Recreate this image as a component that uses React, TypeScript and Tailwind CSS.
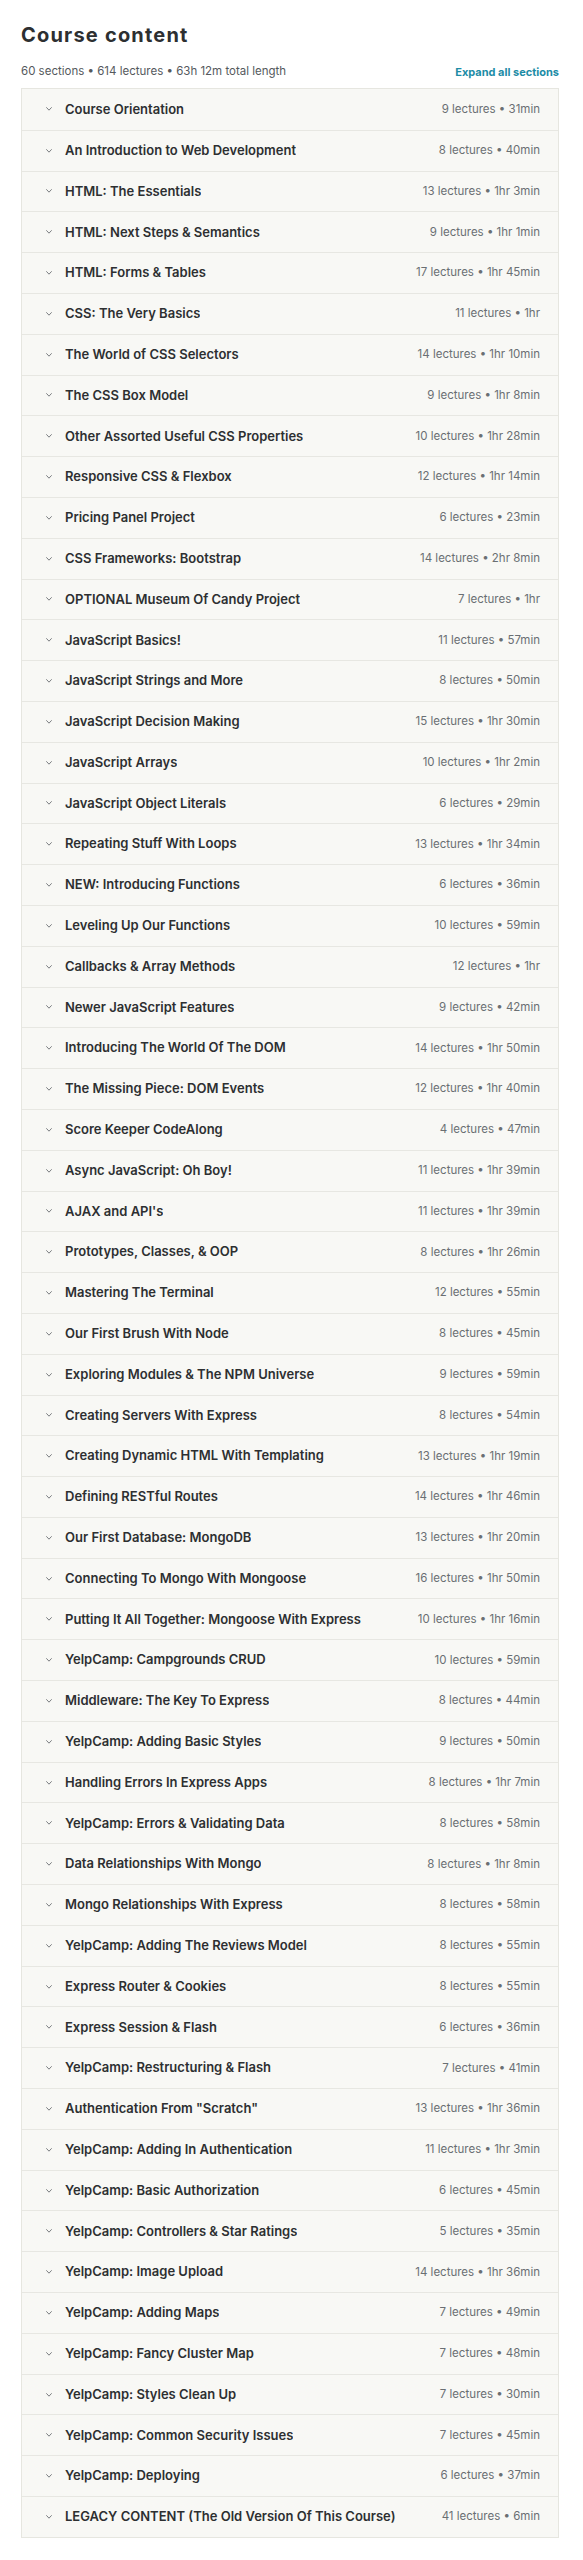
interface Section {
    title: string;
    meta: string;
}

const sections: Section[] = [
    { title: "Course Orientation", meta: "9 lectures • 31min" },
    { title: "An Introduction to Web Development", meta: "8 lectures • 40min" },
    { title: "HTML: The Essentials", meta: "13 lectures • 1hr 3min" },
    { title: "HTML: Next Steps & Semantics", meta: "9 lectures • 1hr 1min" },
    { title: "HTML: Forms & Tables", meta: "17 lectures • 1hr 45min" },
    { title: "CSS: The Very Basics", meta: "11 lectures • 1hr" },
    { title: "The World of CSS Selectors", meta: "14 lectures • 1hr 10min" },
    { title: "The CSS Box Model", meta: "9 lectures • 1hr 8min" },
    { title: "Other Assorted Useful CSS Properties", meta: "10 lectures • 1hr 28min" },
    { title: "Responsive CSS & Flexbox", meta: "12 lectures • 1hr 14min" },
    { title: "Pricing Panel Project", meta: "6 lectures • 23min" },
    { title: "CSS Frameworks: Bootstrap", meta: "14 lectures • 2hr 8min" },
    { title: "OPTIONAL Museum Of Candy Project", meta: "7 lectures • 1hr" },
    { title: "JavaScript Basics!", meta: "11 lectures • 57min" },
    { title: "JavaScript Strings and More", meta: "8 lectures • 50min" },
    { title: "JavaScript Decision Making", meta: "15 lectures • 1hr 30min" },
    { title: "JavaScript Arrays", meta: "10 lectures • 1hr 2min" },
    { title: "JavaScript Object Literals", meta: "6 lectures • 29min" },
    { title: "Repeating Stuff With Loops", meta: "13 lectures • 1hr 34min" },
    { title: "NEW: Introducing Functions", meta: "6 lectures • 36min" },
    { title: "Leveling Up Our Functions", meta: "10 lectures • 59min" },
    { title: "Callbacks & Array Methods", meta: "12 lectures • 1hr" },
    { title: "Newer JavaScript Features", meta: "9 lectures • 42min" },
    { title: "Introducing The World Of The DOM", meta: "14 lectures • 1hr 50min" },
    { title: "The Missing Piece: DOM Events", meta: "12 lectures • 1hr 40min" },
    { title: "Score Keeper CodeAlong", meta: "4 lectures • 47min" },
    { title: "Async JavaScript: Oh Boy!", meta: "11 lectures • 1hr 39min" },
    { title: "AJAX and API's", meta: "11 lectures • 1hr 39min" },
    { title: "Prototypes, Classes, & OOP", meta: "8 lectures • 1hr 26min" },
    { title: "Mastering The Terminal", meta: "12 lectures • 55min" },
    { title: "Our First Brush With Node", meta: "8 lectures • 45min" },
    { title: "Exploring Modules & The NPM Universe", meta: "9 lectures • 59min" },
    { title: "Creating Servers With Express", meta: "8 lectures • 54min" },
    { title: "Creating Dynamic HTML With Templating", meta: "13 lectures • 1hr 19min" },
    { title: "Defining RESTful Routes", meta: "14 lectures • 1hr 46min" },
    { title: "Our First Database: MongoDB", meta: "13 lectures • 1hr 20min" },
    { title: "Connecting To Mongo With Mongoose", meta: "16 lectures • 1hr 50min" },
    { title: "Putting It All Together: Mongoose With Express", meta: "10 lectures • 1hr 16min" },
    { title: "YelpCamp: Campgrounds CRUD", meta: "10 lectures • 59min" },
    { title: "Middleware: The Key To Express", meta: "8 lectures • 44min" },
    { title: "YelpCamp: Adding Basic Styles", meta: "9 lectures • 50min" },
    { title: "Handling Errors In Express Apps", meta: "8 lectures • 1hr 7min" },
    { title: "YelpCamp: Errors & Validating Data", meta: "8 lectures • 58min" },
    { title: "Data Relationships With Mongo", meta: "8 lectures • 1hr 8min" },
    { title: "Mongo Relationships With Express", meta: "8 lectures • 58min" },
    { title: "YelpCamp: Adding The Reviews Model", meta: "8 lectures • 55min" },
    { title: "Express Router & Cookies", meta: "8 lectures • 55min" },
    { title: "Express Session & Flash", meta: "6 lectures • 36min" },
    { title: "YelpCamp: Restructuring & Flash", meta: "7 lectures • 41min" },
    { title: "Authentication From \"Scratch\"", meta: "13 lectures • 1hr 36min" },
    { title: "YelpCamp: Adding In Authentication", meta: "11 lectures • 1hr 3min" },
    { title: "YelpCamp: Basic Authorization", meta: "6 lectures • 45min" },
    { title: "YelpCamp: Controllers & Star Ratings", meta: "5 lectures • 35min" },
    { title: "YelpCamp: Image Upload", meta: "14 lectures • 1hr 36min" },
    { title: "YelpCamp: Adding Maps", meta: "7 lectures • 49min" },
    { title: "YelpCamp: Fancy Cluster Map", meta: "7 lectures • 48min" },
    { title: "YelpCamp: Styles Clean Up", meta: "7 lectures • 30min" },
    { title: "YelpCamp: Common Security Issues", meta: "7 lectures • 45min" },
    { title: "YelpCamp: Deploying", meta: "6 lectures • 37min" },
    { title: "LEGACY CONTENT (The Old Version Of This Course)", meta: "41 lectures • 6min" },
];

// tiny caret used by the collapsed sections
const Caret = () => (
    <svg viewBox="0 0 6 4" className="w-[6px] h-[4px] shrink-0" fill="none">
        <polyline points="0.6,0.6 3,3.2 5.4,0.6" stroke="#7a7d80" strokeWidth="1" strokeLinecap="round" strokeLinejoin="round" />
    </svg>
);

const SectionRow = ({ section, first }: { section: Section; first: boolean }) => (
    <div
        className={`flex items-center h-[40.8px] pl-[24px] pr-[18px] bg-[#f8f8f5] ${first ? "" : "border-t border-[#e7e7e2]"}`}
    >
        <Caret />
        <span className="ml-[13px] text-[13px] font-semibold text-[#2d2f31] truncate">{section.title}</span>
        <span className="ml-auto pl-3 text-[11.5px] text-[#6a6f73] whitespace-nowrap">{section.meta}</span>
    </div>
);

const App = () => {
    return (
        <div className="bg-white min-h-screen pl-[21px] pr-[24px] pt-[23px] pb-[22px] font-['Inter',sans-serif]">
            <h2 className="text-[20px] leading-[24px] font-bold text-[#2d2f31] tracking-[1.2px]">Course content</h2>

            <div className="flex items-center justify-between mt-[16px] h-[18px]">
                <span className="text-[11.5px] text-[#55595d]">60 sections • 614 lectures • 63h 12m total length</span>
                <button type="button" className="text-[11px] font-bold text-[#1c8ca6]">
                    Expand all sections
                </button>
            </div>

            <div className="mt-[7px] border border-[#e6e6e0]">
                {sections.map((s, i) => (
                    <SectionRow key={s.title} section={s} first={i === 0} />
                ))}
            </div>
        </div>
    );
};

export default App;
